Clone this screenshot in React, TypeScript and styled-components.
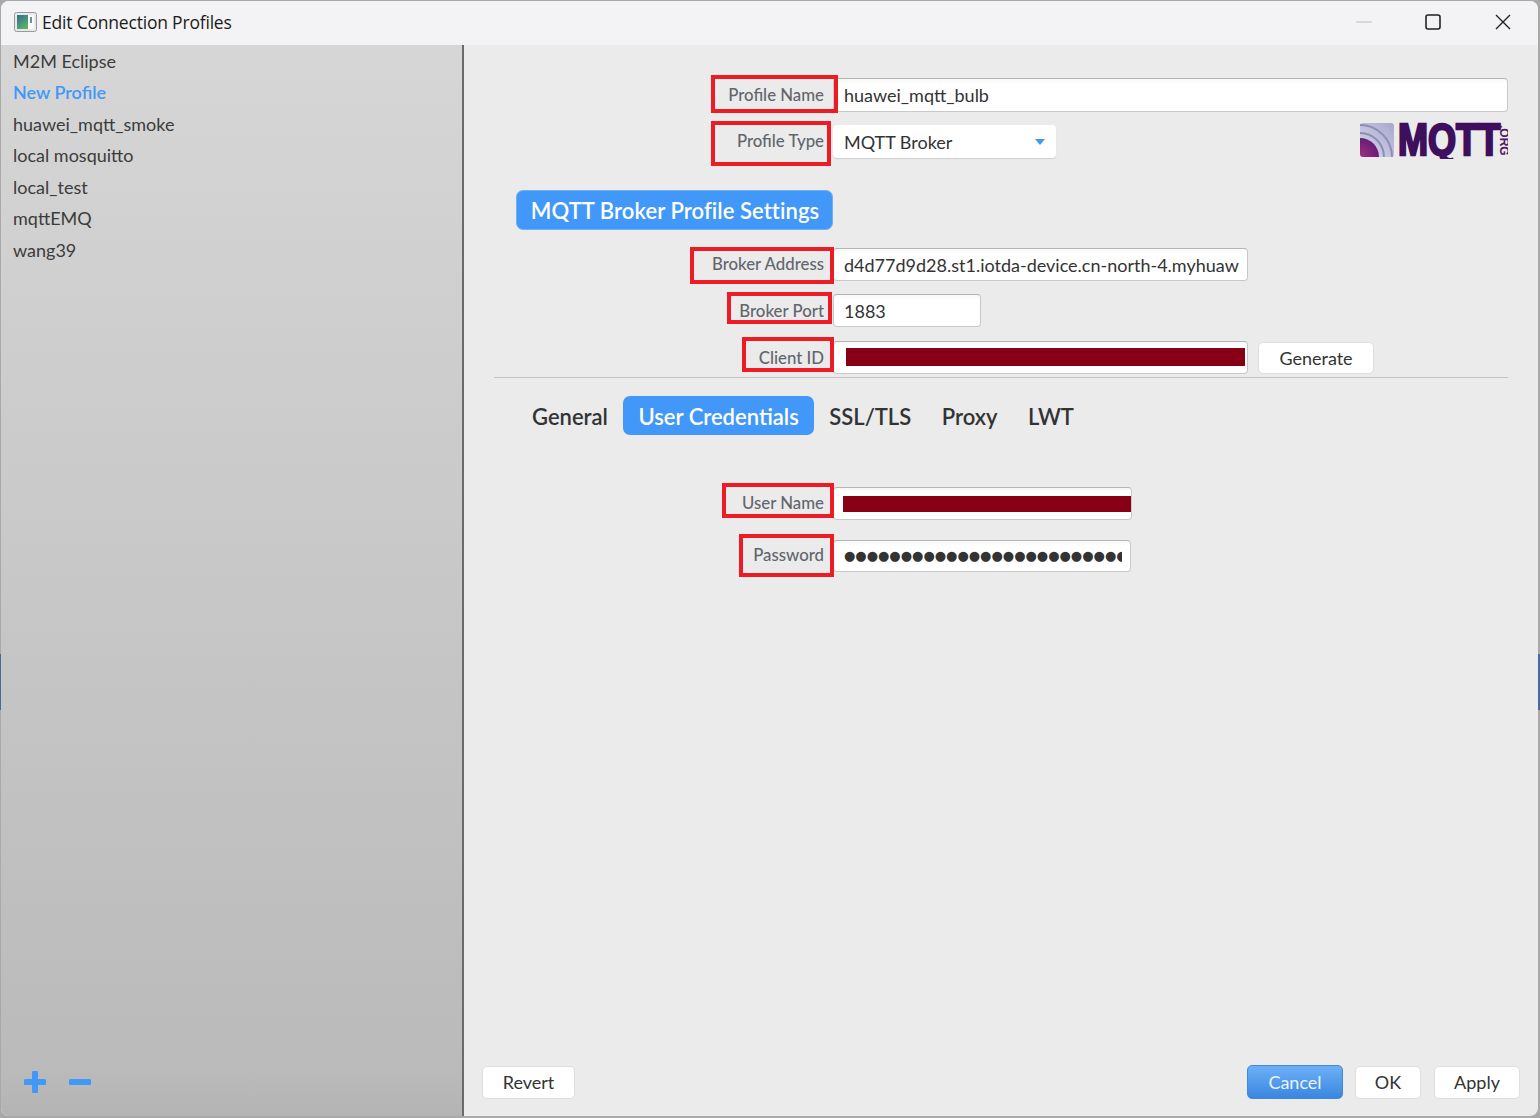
import React from "react";
import styled, { createGlobalStyle } from "styled-components";

const Global = createGlobalStyle`
  html, body { margin: 0; padding: 0; background: #a9a9a9; }
  #root { width: 1540px; height: 1118px; overflow: hidden; }
  * { box-sizing: border-box; }
`;

const Desktop = styled.div`
  position: relative;
  width: 1540px;
  height: 1118px;
  padding: 1px 2px 2px 1px;
  background: #a9a9a9;
`;
const Sliver = styled.div<{ $side: "left" | "right" }>`
  position: absolute;
  top: 654px;
  height: 56px;
  width: 2px;
  background: #46699f;
  ${(p) => p.$side}: 0;
`;
const Window = styled.div`
  position: relative;
  width: 100%;
  height: 100%;
  display: flex;
  flex-direction: column;
  border-radius: 8px;
  overflow: hidden;
  background: #ebebeb;
`;
const TitleBar = styled.header`
  flex: 0 0 44px;
  display: flex;
  align-items: center;
  padding: 0 0 2px 13px;
  background: #f3f3f5;
`;
const Title = styled.span`
  margin-left: 5px;
  font: 17.5px/24px "Open Sans", sans-serif;
  letter-spacing: -0.2px;
  color: #1b1b1b;
`;
const Controls = styled.div`
  margin-left: auto;
  display: flex;
  align-items: center;
`;
const ControlBox = styled.div<{ $w: number }>`
  width: ${(p) => p.$w}px;
  display: flex;
  justify-content: center;
`;
const Body = styled.div`
  flex: 1;
  min-height: 0;
  display: flex;
`;
const Sidebar = styled.aside`
  flex: 0 0 463px;
  display: flex;
  flex-direction: column;
  background: linear-gradient(#d6d6d6, #bababa 96%, #b4b4b4);
  border-right: 2px solid #6a6a6a;
`;
const ProfileList = styled.ul`
  list-style: none;
  margin: 0;
  padding: 0.5px 0 0 12px;
  flex: 1;
`;
const ProfileItem = styled.li<{ $active?: boolean }>`
  font: ${(p) => (p.$active ? 600 : 400)} 18px/31.5px Lato, sans-serif;
  color: ${(p) => (p.$active ? "#4298f8" : "#3c3c3c")};
`;
const SideTools = styled.div`
  display: flex;
  gap: 23px;
  padding: 0 0 23px 23px;
`;
const Pane = styled.main`
  flex: 1;
  display: flex;
  flex-direction: column;
`;
const Form = styled.div`
  padding: 30px 30px 0;
`;
const Row = styled.div<{ $mt?: number }>`
  display: flex;
  align-items: flex-start;
  margin-top: ${(p) => p.$mt ?? 0}px;
`;
const LabelCol = styled.div`
  flex: 0 0 339px;
  display: flex;
  justify-content: flex-end;
`;
const LabelBox = styled.label<{ $w: number; $h: number; $over: number; $pt: number }>`
  position: relative;
  z-index: 2;
  flex: 0 0 auto;
  width: ${(p) => p.$w}px;
  height: ${(p) => p.$h}px;
  margin-right: ${(p) => -p.$over}px;
  padding: ${(p) => p.$pt}px ${(p) => 5 + p.$over}px 0 0;
  border: 4px solid #ed1c24;
  text-align: right;
  font: 500 16.8px/20px Lato, sans-serif;
  color: #62666c;
  white-space: nowrap;
`;
const Field = styled.div<{ $w: number; $h?: number; $dy?: number }>`
  position: relative;
  flex: 0 0 auto;
  width: ${(p) => p.$w}px;
  height: ${(p) => p.$h ?? 33}px;
  margin-top: ${(p) => p.$dy ?? 0}px;
  padding-left: 10px;
  display: flex;
  align-items: center;
  background: linear-gradient(#f8f8f8, #fff 5px);
  border: 1px solid #c9c9c9;
  border-top-color: #b5b5b5;
  border-radius: 4px;
  font: 18px/24px Lato, sans-serif;
  color: #333;
  white-space: nowrap;
  overflow: hidden;
`;
const Select = styled.div`
  flex: 0 0 223px;
  height: 33px;
  margin-top: 4px;
  padding: 0 11px;
  display: flex;
  align-items: center;
  justify-content: space-between;
  background: #fff;
  border-radius: 4px;
  box-shadow: 0 1px 1px #cfcfcf;
  font: 18px/24px Lato, sans-serif;
  color: #333;
`;
const Caret = styled.span`
  width: 0;
  height: 0;
  border-left: 5.5px solid transparent;
  border-right: 5.5px solid transparent;
  border-top: 6px solid #4298f8;
`;
const Redaction = styled.div<{ $w: number; $h: number; $ml: number; $mb?: number }>`
  flex: 0 0 auto;
  width: ${(p) => p.$w}px;
  height: ${(p) => p.$h}px;
  margin: 0 0 ${(p) => p.$mb ?? 0}px ${(p) => p.$ml}px;
  background: #880015;
`;
const Dots = styled.span`
  display: block;
  width: 278px;
  overflow: hidden;
  font: 13px/24px "DejaVu Sans", sans-serif;
  color: #333;
`;
const LogoSlot = styled.div`
  margin: 1px 0 0 auto;
  line-height: 0;
`;
const SectionTitle = styled.div`
  width: 317px;
  height: 40px;
  margin: 24px 0 0 22px;
  padding: 2px 0 0 1px;
  display: flex;
  align-items: center;
  justify-content: center;
  background: #4298f8;
  border: 1px solid #6fb0f8;
  border-radius: 7px;
  font: 600 22px/28px Lato, sans-serif;
  letter-spacing: 0.07px;
  color: #fff;
`;
const Btn = styled.button<{ $w: number; $primary?: boolean }>`
  flex: 0 0 ${(p) => p.$w}px;
  height: ${(p) => (p.$primary ? 34 : 33)}px;
  margin-right: ${(p) => (p.$primary ? -1 : 0)}px;
  padding: 0;
  border: ${(p) => (p.$primary ? "1px solid #3f8ae0" : "1px solid #dedede")};
  border-radius: 5px;
  background: ${(p) => (p.$primary ? "linear-gradient(#6cb0f7, #3a86df)" : "#fff")};
  font: 18px/24px Lato, sans-serif;
  color: ${(p) => (p.$primary ? "#eaf3ff" : "#333")};
`;
const GenerateBtn = styled(Btn)`
  margin: 5px 0 0 10px;
  height: 32px;
`;
const Rule = styled.hr`
  margin: 3px 0 0;
  border: 0;
  border-top: 1px solid #c4c4c4;
`;
const Tabs = styled.nav`
  display: flex;
  align-items: center;
  gap: 0.5px;
  margin: 18px 0 0 23px;
`;
const Tab = styled.div<{ $active?: boolean }>`
  height: 39px;
  padding: 2px 15px 0;
  display: flex;
  align-items: center;
  border-radius: 7px;
  background: ${(p) => (p.$active ? "#4298f8" : "transparent")};
  font: 600 22px/28px Lato, sans-serif;
  color: ${(p) => (p.$active ? "#fff" : "#333")};
`;
const Footer = styled.footer`
  margin-top: auto;
  padding: 0 18px 17px;
  display: flex;
  align-items: center;
  gap: 13px;
`;
const Spacer = styled.div`
  flex: 1;
`;

const AppIcon = () => (
  <svg width="23" height="20" viewBox="0 0 23 20">
    <defs>
      <linearGradient id="ai" x1="0" y1="0" x2="0.6" y2="1">
        <stop offset="0" stopColor="#2f6d92" />
        <stop offset="1" stopColor="#5cb06a" />
      </linearGradient>
    </defs>
    <rect x="0.5" y="0.5" width="22" height="19" rx="2" fill="#e8e8ea" stroke="#9a9a9a" />
    <rect x="3" y="3" width="11" height="14" fill="url(#ai)" />
    <rect x="14" y="3" width="6" height="14" fill="#fbfbfb" />
    <rect x="16" y="5" width="2" height="6" fill="#5f9a8c" />
  </svg>
);

const PlusIcon = () => (
  <svg width="22" height="22" viewBox="0 0 22 22">
    <path d="M11 2v18M2 11h18" stroke="#4298f8" strokeWidth="6" strokeLinecap="round" />
  </svg>
);
const MinusIcon = () => (
  <svg width="22" height="22" viewBox="0 0 22 22">
    <path d="M2 11h18" stroke="#4298f8" strokeWidth="6" strokeLinecap="round" />
  </svg>
);

const MqttLogo = () => (
  <svg width="148" height="37" viewBox="0 0 148 37">
    <defs>
      <linearGradient id="lg" gradientUnits="userSpaceOnUse" x1="0" y1="1" x2="0" y2="36">
        <stop offset="0" stopColor="#3d0f5c" />
        <stop offset="0.55" stopColor="#4d1a68" />
        <stop offset="1" stopColor="#80508f" />
      </linearGradient>
      <linearGradient id="sq" x1="1" y1="0" x2="0" y2="1">
        <stop offset="0" stopColor="#a8a8cc" />
        <stop offset="1" stopColor="#d8d8ea" />
      </linearGradient>
      <radialGradient id="rg" cx="0" cy="1" r="1">
        <stop offset="0" stopColor="#a0307f" />
        <stop offset="1" stopColor="#6a1c78" />
      </radialGradient>
    </defs>
    <rect x="0" y="1" width="34" height="34" rx="3" fill="url(#sq)" />
    <path d="M0 16a19 19 0 0 1 19 19H3a3 3 0 0 1-3-3Z" fill="url(#rg)" />
    <path d="M0 11a24 24 0 0 1 24 24M0 3a32 32 0 0 1 32 32" fill="none" stroke="#8d8dba" strokeWidth="2" />
    <text
      transform="translate(38 32.5) scale(0.82 1)"
      fontFamily="'Liberation Sans', sans-serif"
      fontWeight="700"
      fontSize="44"
      fill="url(#lg)"
      stroke="url(#lg)"
      strokeWidth="2.4"
    >
      MQTT
    </text>
    <text
      transform="translate(140 3) rotate(90)"
      fontFamily="'Liberation Sans', sans-serif"
      fontWeight="700"
      fontSize="12"
      fill="#4d1a68"
    >
      .ORG
    </text>
  </svg>
);

export default function App() {
  const profiles = ["M2M Eclipse", "New Profile", "huawei_mqtt_smoke", "local mosquitto", "local_test", "mqttEMQ", "wang39"];
  return (
    <>
      <Global />
      <Desktop>
        <Sliver $side="left" />
        <Sliver $side="right" />
        <Window>
          <TitleBar>
            <AppIcon />
            <Title>Edit Connection Profiles</Title>
            <Controls>
              <ControlBox $w={67}>
                <svg width="16" height="2" viewBox="0 0 16 2">
                  <path d="M0 1h16" stroke="#bdbdbd" />
                </svg>
              </ControlBox>
              <ControlBox $w={71}>
                <svg width="16" height="16" viewBox="0 0 16 16">
                  <rect x="1" y="1" width="14" height="14" rx="2" fill="none" stroke="#222" strokeWidth="1.6" />
                </svg>
              </ControlBox>
              <ControlBox $w={70}>
                <svg width="16" height="16" viewBox="0 0 16 16">
                  <path d="M1 1l14 14M15 1L1 15" stroke="#222" strokeWidth="1.4" />
                </svg>
              </ControlBox>
            </Controls>
          </TitleBar>
          <Body>
            <Sidebar>
              <ProfileList>
                {profiles.map((n) => (
                  <ProfileItem key={n} $active={n === "New Profile"}>
                    {n}
                  </ProfileItem>
                ))}
              </ProfileList>
              <SideTools>
                <PlusIcon />
                <MinusIcon />
              </SideTools>
            </Sidebar>
            <Pane>
              <Form>
                <Row>
                  <LabelCol>
                    <LabelBox $w={127} $h={38} $over={5} $pt={6}>Profile Name</LabelBox>
                  </LabelCol>
                  <Field $w={675} $h={34} $dy={3}>huawei_mqtt_bulb</Field>
                </Row>
                <Row $mt={8}>
                  <LabelCol>
                    <LabelBox $w={120} $h={45} $over={-2} $pt={6}>Profile Type</LabelBox>
                  </LabelCol>
                  <Select>
                    MQTT Broker
                    <Caret />
                  </Select>
                  <LogoSlot>
                    <MqttLogo />
                  </LogoSlot>
                </Row>
                <SectionTitle>MQTT Broker Profile Settings</SectionTitle>
                <Row $mt={17}>
                  <LabelCol>
                    <LabelBox $w={144} $h={37} $over={1} $pt={3}>Broker Address</LabelBox>
                  </LabelCol>
                  <Field $w={415} $dy={1}>d4d77d9d28.st1.iotda-device.cn-north-4.myhuaw</Field>
                </Row>
                <Row $mt={8}>
                  <LabelCol>
                    <LabelBox $w={105} $h={32} $over={-1} $pt={5}>Broker Port</LabelBox>
                  </LabelCol>
                  <Field $w={148} $dy={2}>1883</Field>
                </Row>
                <Row $mt={10}>
                  <LabelCol>
                    <LabelBox $w={92} $h={35} $over={1} $pt={7}>Client ID</LabelBox>
                  </LabelCol>
                  <Field $w={415} $dy={4}>
                    <Redaction $w={399} $h={18} $ml={2} $mb={2} />
                  </Field>
                  <GenerateBtn $w={116}>Generate</GenerateBtn>
                </Row>
                <Rule />
                <Tabs>
                  <Tab>General</Tab>
                  <Tab $active>User Credentials</Tab>
                  <Tab>SSL/TLS</Tab>
                  <Tab>Proxy</Tab>
                  <Tab>LWT</Tab>
                </Tabs>
                <Row $mt={48}>
                  <LabelCol>
                    <LabelBox $w={112} $h={35} $over={1} $pt={6}>User Name</LabelBox>
                  </LabelCol>
                  <Field $w={299} $dy={4}>
                    <Redaction $w={290} $h={16} $ml={-1} />
                  </Field>
                </Row>
                <Row $mt={14}>
                  <LabelCol>
                    <LabelBox $w={95} $h={43} $over={1} $pt={7}>Password</LabelBox>
                  </LabelCol>
                  <Field $w={298} $h={32} $dy={6}>
                    <Dots>{"●".repeat(30)}</Dots>
                  </Field>
                </Row>
              </Form>
              <Footer>
                <Btn $w={93}>Revert</Btn>
                <Spacer />
                <Btn $w={96} $primary>Cancel</Btn>
                <Btn $w={66}>OK</Btn>
                <Btn $w={86}>Apply</Btn>
              </Footer>
            </Pane>
          </Body>
        </Window>
      </Desktop>
    </>
  );
}
